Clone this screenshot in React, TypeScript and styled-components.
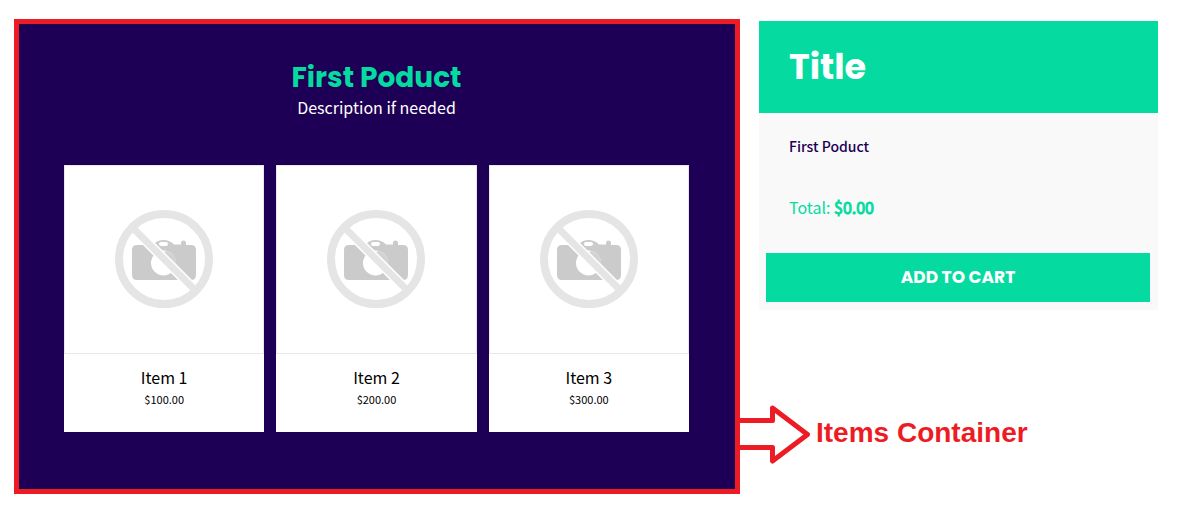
import React from "react";
import styled, { createGlobalStyle } from "styled-components";

const NAVY = "#1d0055";
const GREEN = "#05dba0";
const RED = "#ed1c24";

const bodyFont = `"Source Sans Pro", "Noto Sans CJK SC", "Noto Sans", sans-serif`;
const headingFont = `Poppins, Inter, sans-serif`;

const GlobalStyle = createGlobalStyle`
  *, *::before, *::after { box-sizing: border-box; }
  body { margin: 0; background: #fff; font-family: ${bodyFont}; }
  h1, h2, h3, p { margin: 0; }
`;

const Page = styled.div`
  display: grid;
  grid-template-columns: minmax(0, 726fr) minmax(0, 418fr);
  align-items: start;
  padding: 19px 25px 11px 14px;
`;

const ItemsContainer = styled.main`
  padding: 36px 46px 57px 45px;
  border: 5px solid ${RED};
  background: ${NAVY};
`;

const ProductHeader = styled.header`
  text-align: center;
  padding-bottom: 47px;
`;

const ProductTitle = styled.h1`
  color: ${GREEN};
  font: 700 28px/36px ${headingFont};
`;

const Description = styled.p`
  color: #fff;
  font-size: 16px;
  line-height: 22px;
`;

const ItemGrid = styled.div`
  display: grid;
  grid-template-columns: repeat(3, minmax(0, 1fr));
  gap: 12px;
`;

const ItemCard = styled.article`
  background: #fff;
  text-align: center;
  padding-bottom: 22px;
`;

const ImageFrame = styled.div`
  display: flex;
  align-items: center;
  justify-content: center;
  height: 189px;
  padding-bottom: 1px;
  margin-bottom: 12px;
  border: 1px solid #e8e8e8;
`;

const ItemName = styled.h3`
  color: #000;
  font-size: 16px;
  font-weight: 400;
  line-height: 22px;
`;

const Price = styled.p`
  color: #000;
  font-size: 11px;
  line-height: 22px;
`;

const Side = styled.div`
  display: flex;
  flex-direction: column;
  gap: 94px;
  padding-top: 2px;
`;

const SummaryCard = styled.aside`
  margin-left: 19px;
  background: #f9f9f9;
`;

const SummaryHeader = styled.header`
  padding: 24px 30px;
  background: ${GREEN};
`;

const SummaryTitle = styled.h2`
  color: #fff;
  font: 700 35px/44px ${headingFont};
`;

const SummaryBody = styled.div`
  padding: 21px 30px 34px;
`;

const SummaryProduct = styled.p`
  color: ${NAVY};
  font-size: 14px;
  font-weight: 500;
  line-height: 24px;
  margin-bottom: 37px;
`;

const Total = styled.p`
  color: ${GREEN};
  font-size: 16px;
  line-height: 24px;
`;

const Amount = styled.strong`
  font-weight: 400;
  -webkit-text-stroke: 1px ${GREEN};
`;

const CartAction = styled.div`
  padding: 0 8px 8px 7px;
`;

const CartButton = styled.button`
  display: block;
  width: 100%;
  padding: 12px;
  border: 0;
  background: ${GREEN};
  color: #fff;
  font: 700 17px/25px ${headingFont};
  text-transform: uppercase;
  cursor: pointer;
`;

const Callout = styled.div`
  display: flex;
  align-items: center;
  gap: 6px;
`;

const CalloutLabel = styled.p`
  color: ${RED};
  font: bold 28px/32px "Liberation Sans", Arial, sans-serif;
  padding-bottom: 2px;
  white-space: nowrap;
`;

const NoImage = () => (
  <svg width="98" height="98" viewBox="0 0 98 98" role="img" aria-label="No image available">
    <path
      fill="#cbcbcb"
      d="M22 35H38Q42 30 48.500 30T59 34.500H66V33Q66 30.500 68.500 30.500T71 33V35H76Q81 35 81 40V65Q81 70 76 70H22Q17 70 17 65V40Q17 35 22 35Z"
    />
    <rect x="44" y="32" width="9" height="4" rx="2" fill="#fff" />
    <circle cx="48.500" cy="53" r="12.500" fill="#fff" />
    <path d="M52 41A12.500 12.500 0 0 1 60.500 57L46 43Z" fill="#d2d2d2" />
    <path d="M17 17L81 81" stroke="#fff" strokeWidth="10" />
    <path d="M17 17L81 81" stroke="#e5e5e5" strokeWidth="7" />
    <circle cx="49" cy="49" r="45" fill="none" stroke="#e5e5e5" strokeWidth="8" />
  </svg>
);

const Arrow = () => (
  <svg width="70" height="60" viewBox="0 0 70 60" aria-hidden="true">
    <path
      d="M0 16.500H32.500V4L67.500 30.500L32.500 57V43.500H0"
      fill="none"
      stroke={RED}
      strokeWidth="5"
      strokeLinejoin="round"
    />
  </svg>
);

const items = [
  { name: "Item 1", price: "$100.00" },
  { name: "Item 2", price: "$200.00" },
  { name: "Item 3", price: "$300.00" },
];

export default function App() {
  return (
    <>
      <GlobalStyle />
      <Page>
        <ItemsContainer>
          <ProductHeader>
            <ProductTitle>First Poduct</ProductTitle>
            <Description>Description if needed</Description>
          </ProductHeader>
          <ItemGrid>
            {items.map((item) => (
              <ItemCard key={item.name}>
                <ImageFrame>
                  <NoImage />
                </ImageFrame>
                <ItemName>{item.name}</ItemName>
                <Price>{item.price}</Price>
              </ItemCard>
            ))}
          </ItemGrid>
        </ItemsContainer>
        <Side>
          <SummaryCard>
            <SummaryHeader>
              <SummaryTitle>Title</SummaryTitle>
            </SummaryHeader>
            <SummaryBody>
              <SummaryProduct>First Poduct</SummaryProduct>
              <Total>
                Total: <Amount>$0.00</Amount>
              </Total>
            </SummaryBody>
            <CartAction>
              <CartButton type="button">Add to cart</CartButton>
            </CartAction>
          </SummaryCard>
          <Callout>
            <Arrow />
            <CalloutLabel>Items Container</CalloutLabel>
          </Callout>
        </Side>
      </Page>
    </>
  );
}
